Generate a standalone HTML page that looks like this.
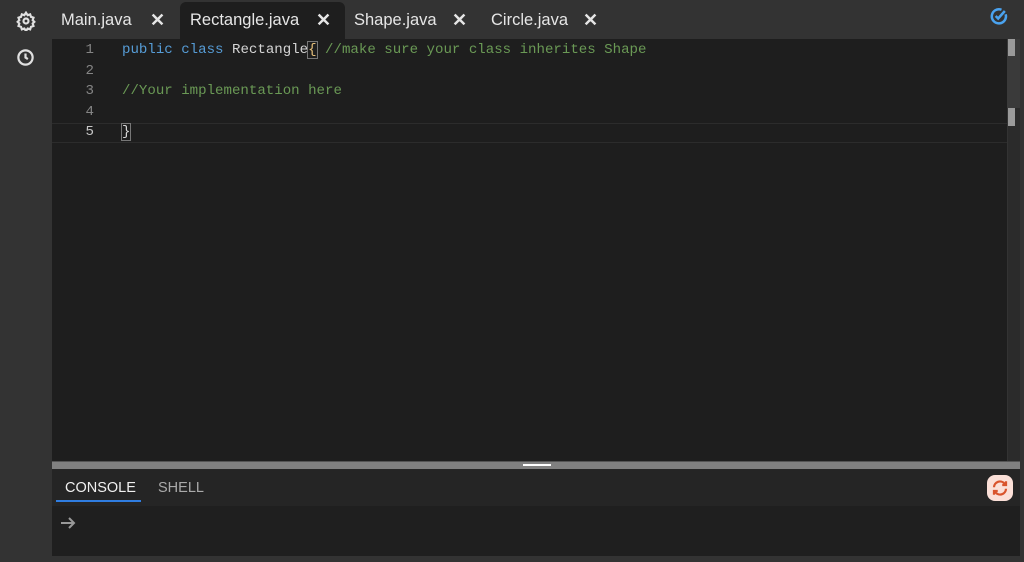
<!DOCTYPE html>
<html><head><style>
*{margin:0;padding:0;box-sizing:border-box}
body{width:1024px;height:562px;background:#333;position:relative;overflow:hidden;font-family:"Liberation Sans",sans-serif}
.side{position:absolute;left:0;top:0;width:52px;height:562px;background:#333}
.tabbar{position:absolute;left:52px;top:0;width:972px;height:39px;background:#333}
.tab{position:absolute;top:2px;height:37px;color:#e6e6e6;font-size:16.5px;line-height:37px}
.tab .x{position:absolute;font-size:18px;font-weight:bold}
.active{background:#1e1e1e;border-radius:6px 6px 0 0}
.editor{position:absolute;left:52px;top:39px;width:968px;height:422px;background:#1e1e1e}
.code{position:absolute;font-family:"Liberation Mono",monospace;font-size:14.1px;white-space:pre;line-height:20.5px}
.ln{position:absolute;left:0;width:42px;text-align:right;color:#858585}
.kw{color:#569cd6}.cm{color:#6a9955}.tx{color:#d4d4d4}
.split{position:absolute;left:52px;top:461px;width:968px;height:8px;background:#808080;border-top:1px solid #555}
.ctabs{position:absolute;left:52px;top:469px;width:968px;height:37px;background:#252525}
.cbody{position:absolute;left:52px;top:506px;width:968px;height:50px;background:#1f1f1f}
</style></head><body>
<div class="side">
<svg style="position:absolute;left:16px;top:11px" width="20" height="20" viewBox="0 0 24 24" fill="none" stroke="#e0e0e0" stroke-width="2.6"><circle cx="12" cy="12" r="3"/><path d="M12 2l2 3 3-1 1 3 3 1-1 3 2 2-2 2 1 3-3 1-1 3-3-1-2 3-2-3-3 1-1-3-3-1 1-3-2-2 2-2-1-3 3-1 1-3 3 1z"/></svg>
<svg style="position:absolute;left:16px;top:48px" width="19" height="19" viewBox="0 0 24 24" fill="none" stroke="#e0e0e0" stroke-width="2.8"><circle cx="12" cy="12" r="9"/><path d="M12 7v5l3 2"/></svg>
</div>
<div class="tabbar">
<div class="tab" style="left:9px;width:120px">Main.java<span class="x" style="left:89px">✕</span></div>
<div class="tab active" style="left:128px;width:165px"><span style="position:absolute;left:10px">Rectangle.java</span><span class="x" style="left:136px">✕</span></div>
<div class="tab" style="left:302px;width:130px">Shape.java<span class="x" style="left:98px">✕</span></div>
<div class="tab" style="left:439px;width:130px">Circle.java<span class="x" style="left:92px">✕</span></div>
<svg style="position:absolute;left:937px;top:6px" width="20" height="20" viewBox="0 0 24 24" fill="none" stroke="#4aa3f0" stroke-width="3"><path d="M20 10A8.5 8.5 0 1 1 15 4.5"/><path d="M8 12l3 3 8-9"/></svg>
</div>
<div class="editor">
<div style="position:absolute;left:0;top:84px;width:955px;height:20px;border-top:1px solid #2c2c2c;border-bottom:1px solid #2c2c2c"></div>
<div class="code ln" style="top:1px;left:0">1<br>2<br>3<br>4<br><span style="color:#c6c6c6">5</span></div>
<div class="code" style="left:70px;top:1px"><span class="kw">public</span> <span class="kw">class</span> <span class="tx">Rectangle<span style="outline:1px solid #777;color:#e6c07b">{</span></span> <span class="cm">//make sure your class inherites Shape</span>

<span class="cm">//Your implementation here</span>

<span class="tx" style="outline:1px solid #777">}</span></div>
<div style="position:absolute;left:955px;top:0;width:13px;height:422px;background:#2b2b2b;border-left:1px solid #333"></div>
<div style="position:absolute;left:955px;top:0;width:13px;height:69px;background:#3a3a3a"></div>
<div style="position:absolute;left:956px;top:0;width:7px;height:17px;background:#9a9a9a"></div>
<div style="position:absolute;left:956px;top:69px;width:7px;height:18px;background:#9a9a9a"></div>
</div>
<div class="split"><div style="position:absolute;left:471px;top:2px;width:28px;height:2px;background:#fff"></div></div>
<div class="ctabs">
<div style="position:absolute;left:13px;top:11px;color:#f0f0f0;font-size:14.5px">CONSOLE</div>
<div style="position:absolute;left:4px;top:31px;width:85px;height:2px;background:#2f7de1"></div>
<div style="position:absolute;left:106px;top:11px;color:#aaa;font-size:14.5px">SHELL</div>
<div style="position:absolute;left:935px;top:6px;width:26px;height:26px;border-radius:8px;background:#fbe0d8">
<svg style="position:absolute;left:4px;top:4px" width="18" height="18" viewBox="0 0 24 24" fill="none" stroke="#d9542c" stroke-width="3"><path d="M4 11a8 8 0 0 1 14-5l2 2"/><path d="M20 3v5h-5"/><path d="M20 13a8 8 0 0 1-14 5l-2-2"/><path d="M4 21v-5h5"/></svg></div>
</div>
<div class="cbody"><svg style="position:absolute;left:8px;top:11px" width="16" height="12" viewBox="0 0 16 12" fill="none" stroke="#999" stroke-width="2"><path d="M1 6h13M9 1l5 5-5 5"/></svg></div>
</body></html>
